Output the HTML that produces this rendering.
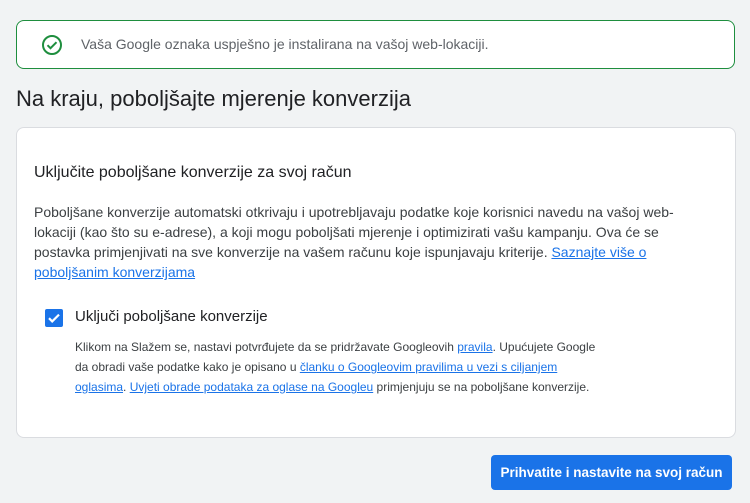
<!DOCTYPE html>
<html><head><meta charset="utf-8"><style>
body{margin:0;width:750px;height:503px;background:#f1f3f4;font-family:"Liberation Sans",Arial,sans-serif;color:#3c4043;position:relative;overflow:hidden}
.banner{position:absolute;left:16px;top:20px;width:717px;height:47px;background:#fff;border:1px solid #1e8e3e;border-radius:8px}
.banner svg{position:absolute;left:24px;top:13px}
.banner span{position:absolute;left:64px;top:15px;font-size:14px;color:#5f6368}
h1{position:absolute;left:16px;top:86px;margin:0;font-size:22px;font-weight:400;color:#202124}
.card{position:absolute;left:16px;top:127px;width:718px;height:309px;background:#fff;border:1px solid #dadce0;border-radius:8px}
.t{position:absolute;left:17px;top:36px;font-size:16px;color:#202124}
.p{position:absolute;left:17px;top:74px;width:670px;font-size:14px;line-height:20px;color:#3c4043}
a{color:#1a73e8;text-decoration:underline}
.cb{position:absolute;left:28px;top:181px;width:18px;height:18px;background:#1a73e8;border-radius:2px}
.lab{position:absolute;left:58px;top:180px;font-size:15px;color:#202124}
.s{position:absolute;left:58px;top:209px;width:555px;font-size:12px;line-height:20px;color:#3c4043}
.btn{position:absolute;left:491px;top:455px;width:241px;height:35px;background:#1a73e8;border-radius:4px;color:#fff;font-size:13.5px;font-weight:bold;text-align:center;line-height:35px}
</style></head><body>
<div class="banner"><svg width="22" height="22" viewBox="0 0 22 22"><circle cx="11" cy="11" r="9" fill="none" stroke="#1e8e3e" stroke-width="2"/><path d="M6.5 11.2l3 3 6-6" fill="none" stroke="#1e8e3e" stroke-width="2"/></svg><span>Vaša Google oznaka uspješno je instalirana na vašoj web-lokaciji.</span></div>
<h1>Na kraju, poboljšajte mjerenje konverzija</h1>
<div class="card">
<div class="t">Uključite poboljšane konverzije za svoj račun</div>
<div class="p">Poboljšane konverzije automatski otkrivaju i upotrebljavaju podatke koje korisnici navedu na vašoj web-lokaciji (kao što su e-adrese), a koji mogu poboljšati mjerenje i optimizirati vašu kampanju. Ova će se postavka primjenjivati na sve konverzije na vašem računu koje ispunjavaju kriterije. <a>Saznajte više o poboljšanim konverzijama</a></div>
<div class="cb"><svg width="18" height="18" viewBox="0 0 18 18"><path d="M4 9.2l3.2 3.2 6.8-6.8" fill="none" stroke="#fff" stroke-width="2.2"/></svg></div>
<div class="lab">Uključi poboljšane konverzije</div>
<div class="s">Klikom na Slažem se, nastavi potvrđujete da se pridržavate Googleovih <a>pravila</a>. Upućujete Google<br>da obradi vaše podatke kako je opisano u <a>članku o Googleovim pravilima u vezi s ciljanjem<br>oglasima</a>. <a>Uvjeti obrade podataka za oglase na Googleu</a> primjenjuju se na poboljšane konverzije.</div>
</div>
<div class="btn">Prihvatite i nastavite na svoj račun</div>
</body></html>
